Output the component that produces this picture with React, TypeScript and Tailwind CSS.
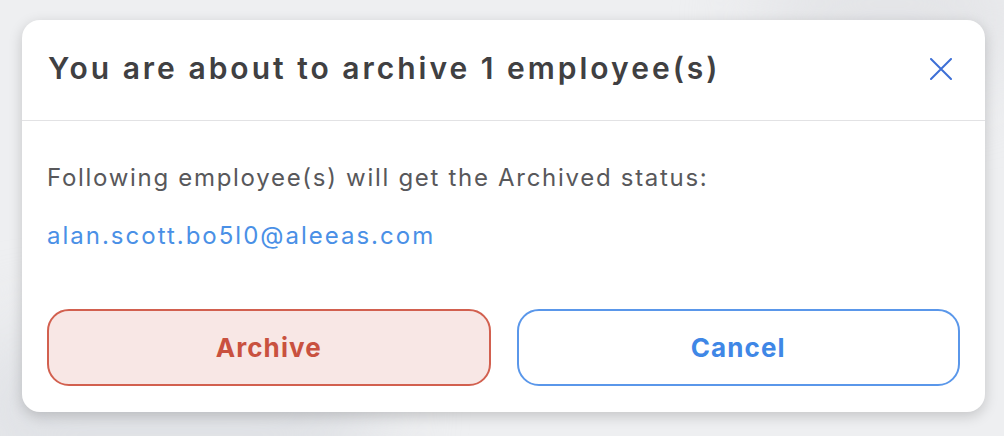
export default function App() {
  return (
    <div
      className="relative h-[436px] w-[1004px] overflow-hidden bg-[#eeeff1]"
      style={{ fontFamily: "Inter, 'Noto Sans', sans-serif" }}
    >
      <div className="absolute -left-10 top-[330px] h-[160px] w-[420px] rounded-full bg-[#dfe1e5] blur-2xl" />
      <div className="absolute left-[760px] -top-10 h-[120px] w-[260px] rounded-full bg-[#e2e3e6] blur-2xl" />
      <div className="relative pl-[22px] pt-[20px] pr-[19px]">
        <div className="flex h-[392px] flex-col rounded-[18px] bg-white shadow-[0_4px_14px_rgba(0,0,0,0.18)]">
          <div className="flex h-[101px] items-start justify-between border-b border-[#e2e2e4] pl-[26px] pr-[33px] pt-[30px]">
            <h2 className="text-[30px] leading-[36px] font-semibold tracking-[3px] text-[#404042]">
              You are about to archive 1 employee(s)
            </h2>
            <svg className="mt-[8px] h-[22px] w-[22px] text-[#3d6fd6]" viewBox="0 0 22 22" fill="none">
              <path d="M1 1L21 21M21 1L1 21" stroke="currentColor" strokeWidth="2" strokeLinecap="round" />
            </svg>
          </div>
          <div className="flex flex-1 flex-col px-[25px]">
            <p className="mt-[45px] text-[24px] leading-[24px] tracking-[1.7px] text-[#58585b]">
              Following employee(s) will get the Archived status:
            </p>
            <p className="mt-[34px] text-[24px] leading-[24px] tracking-[2px] text-[#4a90e6]">
              alan.scott.bo5l0@aleeas.com
            </p>
            <div className="mt-[61px] grid grid-cols-2 gap-[26px]">
              <button className="h-[77px] rounded-[22px] border-2 border-[#d2604f] bg-[#f8e7e5] text-[26px] font-bold tracking-[1.1px] text-[#c9513f]">
                Archive
              </button>
              <button className="h-[77px] rounded-[22px] border-2 border-[#5a97ea] bg-white text-[26px] font-bold tracking-[1.1px] text-[#3f87e6]">
                Cancel
              </button>
            </div>
          </div>
        </div>
      </div>
    </div>
  );
}
